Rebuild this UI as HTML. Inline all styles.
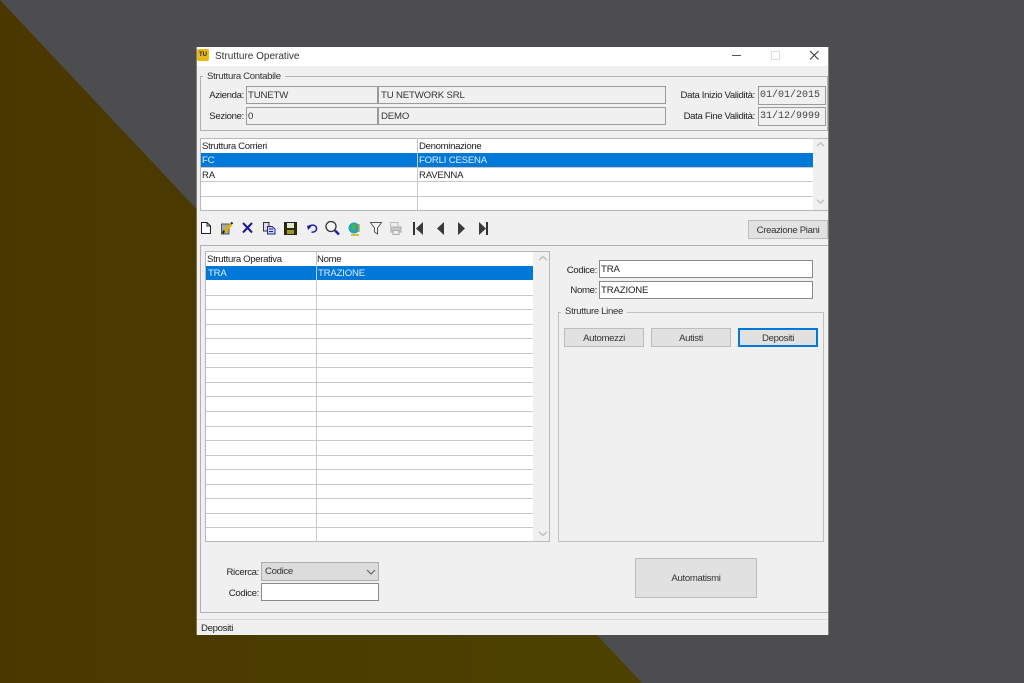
<!DOCTYPE html>
<html><head><meta charset="utf-8"><title>Strutture Operative</title>
<style>
html,body{margin:0;padding:0;width:1024px;height:683px;overflow:hidden;background:#4d4d4f}
body{font-family:"Liberation Sans",sans-serif;font-size:9.6px;letter-spacing:-.33px;color:#222;position:relative}
.all{position:absolute;left:0;top:0;width:1024px;height:683px;filter:blur(.3px)}
.a{position:absolute;box-sizing:border-box;white-space:nowrap}
.t{position:absolute;white-space:nowrap;line-height:12px;height:12px;margin-top:1px}
.r{text-align:right}
.u{letter-spacing:-.2px}
.f{position:absolute;box-sizing:border-box;border:1px solid #9a9a9a;background:#f0f0f0;line-height:18px;padding-left:1px;white-space:nowrap;color:#333;letter-spacing:-.15px}
.w{background:#fff;color:#222;border-color:#8a8a8a}
.m{font-family:"Liberation Mono",monospace;font-size:10px;color:#444;letter-spacing:0;line-height:17px}
.g{position:absolute;box-sizing:border-box;border:1px solid #b4b4b4}
.lg{position:absolute;background:#f0f0f0;padding:0 4px;line-height:12px;white-space:nowrap;color:#333;margin-top:1px}
.b{position:absolute;box-sizing:border-box;background:#e1e1e1;border:1px solid #bdbdbd;text-align:center;white-space:nowrap;color:#333;padding-top:1px}
.s{color:#dfeeff;letter-spacing:-.2px}
</style></head>
<body>
<div class="all">
<svg class="a" style="left:0;top:0" width="1024" height="683">
<defs><linearGradient id="bg" x1="0" x2="1" y1="0" y2="0"><stop offset="0" stop-color="#4a3700"/><stop offset="1" stop-color="#4c4200"/></linearGradient></defs>
<polygon points="0,0 642,683 0,683" fill="url(#bg)"/></svg>

<div class="a" style="left:196px;top:47px;width:1px;height:588px;background:rgba(255,255,255,.3)"></div>
<div class="a" style="left:828px;top:47px;width:1px;height:588px;background:rgba(255,255,255,.3)"></div>
<div class="a" style="left:197px;top:47px;width:631px;height:588px;background:#f0f0f0"></div>
<div class="a" style="left:197px;top:47px;width:631px;height:19px;background:#fff"></div>
<div class="a" style="left:197px;top:49px;width:12px;height:12px;background:#e8b818;border-radius:2px;font:bold 6px 'Liberation Sans',sans-serif;letter-spacing:0;color:#222;text-align:center;line-height:12px">TU</div>
<div class="t" style="left:215px;top:50px;color:#333;font-size:10px;letter-spacing:0">Strutture Operative</div>
<svg class="a" style="left:728px;top:48px" width="96" height="16" fill="none">
<path d="M4 7.500H13" stroke="#555" stroke-width="1"/>
<rect x="43.500" y="3.500" width="8" height="8" stroke="#ddd"/>
<path d="M82 3L90.500 11.500M90.500 3L82 11.500" stroke="#333" stroke-width="1"/></svg>

<!-- Struttura Contabile -->
<div class="g" style="left:200px;top:76px;width:628px;height:55px;border-color:#b0b0b0"></div>
<div class="lg" style="left:203px;top:70px">Struttura Contabile</div>
<div class="t r" style="left:200px;width:44px;top:89px">Azienda:</div>
<div class="t r" style="left:200px;width:44px;top:110px">Sezione:</div>
<div class="f" style="left:246px;top:86px;width:132px;height:18px">TUNETW</div>
<div class="f" style="left:378px;top:86px;width:288px;height:18px;padding-left:2px">TU NETWORK SRL</div>
<div class="f" style="left:246px;top:107px;width:132px;height:18px">0</div>
<div class="f" style="left:378px;top:107px;width:288px;height:18px;padding-left:2px">DEMO</div>
<div class="t r" style="left:650px;width:105px;top:89px">Data Inizio Validità:</div>
<div class="t r" style="left:650px;width:105px;top:110px">Data Fine Validità:</div>
<div class="f m" style="left:758px;top:86px;width:68px;height:19px">01/01/2015</div>
<div class="f m" style="left:758px;top:107px;width:68px;height:19px">31/12/9999</div>

<!-- Grid 1 -->
<div class="a" style="left:200px;top:138px;width:613px;height:73px;background:#fff"></div>
<div class="a" style="left:813px;top:138px;width:15px;height:73px;background:#f0f0f0"></div>
<div class="a" style="left:200px;top:153px;width:613px;height:15px;background:#0078d7"></div>
<svg class="a" style="left:200px;top:138px" width="628" height="75" fill="none" stroke="#c8c8c8">
<path d="M0 29.500H613M0 43.500H613M0 58.500H613M217.500 0V73"/>
<path d="M0 .5H628M.5 0V73M0 72.500H628" stroke="#b8b8b8"/>
<path d="M617 8L620.500 5L624 8" stroke="#c4c4c4" stroke-width="1.500"/>
<path d="M617 62L620.500 65L624 62" stroke="#c4c4c4" stroke-width="1.500"/></svg>
<div class="t" style="left:202px;top:140px">Struttura Corrieri</div>
<div class="t" style="left:419px;top:140px">Denominazione</div>
<div class="t s" style="left:202px;top:154px">FC</div>
<div class="t s" style="left:419px;top:154px">FORLI CESENA</div>
<div class="t u" style="left:202px;top:169px">RA</div>
<div class="t u" style="left:419px;top:169px">RAVENNA</div>

<!-- Toolbar -->
<svg class="a" style="left:196px;top:218px" width="300" height="20" fill="none">
<path d="M5.500 4.500H11L14.500 8V15.500H5.500Z" fill="#fff" stroke="#222"/><path d="M11 4.500V8H14.500" stroke="#222"/>
<path d="M25.500 6H33V16H25.500Z" stroke="#555" fill="#aaa"/>
<path d="M28 14L35 6.500" stroke="#e0b000" stroke-width="3"/><path d="M27 15.500L28 12.500" stroke="#222" stroke-width="2"/><path d="M35 6L36.500 4.500" stroke="#222" stroke-width="2"/>
<path d="M47 5L56 14.500M56 5L47 14.500" stroke="#1a1a90" stroke-width="2"/>
<path d="M67.500 4.500H73V13H67.500Z" fill="#ddd" stroke="#333"/><path d="M71.500 8.500H76L79 11V16H71.500Z" fill="#cfd6f4" stroke="#20209a"/><path d="M73 11H77M73 13.500H77" stroke="#20209a"/>
<path d="M88.500 4.500H100.500V16.500H88.500Z" fill="#2c2c00" stroke="#222"/><rect x="91" y="5" width="7" height="5" fill="#e8e8d8"/><rect x="91" y="12" width="7" height="4" fill="#9a9a30"/>
<path d="M112 12L111 7.500L115.500 8.500Z" fill="#1c1ca0"/><path d="M112.500 8.500C116 6 120 7 120.500 10C121 13 118 14.500 115.500 14" stroke="#1c1ca0" stroke-width="1.500"/>
<circle cx="135" cy="8.500" r="5" fill="#f4f4f4" stroke="#333" stroke-width="1.300"/><path d="M139 12.500L143 16.500" stroke="#2020a8" stroke-width="2.500"/>
<path d="M155 17H163" stroke="#d4c040" stroke-width="2"/><circle cx="158" cy="10" r="5.500" fill="#28a0b8"/><path d="M155 7L159 6L160 10L157 13Z" fill="#48b848"/><path d="M163 6V14" stroke="#c0a830" stroke-width="1.500"/>
<path d="M174.500 4.500H185.500L181.500 10V16L178.500 14V10Z" fill="#f4f4f4" stroke="#555"/>
<path d="M194.500 8.500V4.500H202V8.500" fill="#eee" stroke="#bbb"/><path d="M195 9H205V14H195Z" fill="#c8c8c8" stroke="#aaa"/><path d="M197 12.500H203V16.500H197Z" fill="#eee" stroke="#aaa"/>
<path d="M218 4V17" stroke="#333" stroke-width="2"/><path d="M227 4V17L220 10.500Z" fill="#3a3a3a"/>
<path d="M248 4V17L241 10.500Z" fill="#3a3a3a"/>
<path d="M262 4V17L269 10.500Z" fill="#3a3a3a"/>
<path d="M283 4V17L290 10.500Z" fill="#3a3a3a"/><path d="M291 4V17" stroke="#333" stroke-width="2"/>
</svg>
<div class="b" style="left:748px;top:220px;width:80px;height:19px;line-height:17px">Creazione Piani</div>

<!-- Outer panel -->
<div class="g" style="left:200px;top:245px;width:628px;height:368px;border-right:0;border-color:#b0b0b0"></div>

<!-- Grid 2 -->
<div class="a" style="left:205px;top:251px;width:328px;height:291px;background:#fff"></div>
<div class="a" style="left:206px;top:266px;width:327px;height:14px;background:#0078d7"></div>
<svg class="a" style="left:205px;top:251px" width="346" height="292" fill="none" stroke="#c9c9c9">
<path d="M0 44.500H328M0 58.500H328M0 73.500H328M0 87.500H328M0 102.500H328M0 116.500H328M0 131.500H328M0 145.500H328M0 160.500H328M0 175.500H328M0 189.500H328M0 204.500H328M0 218.500H328M0 233.500H328M0 247.500H328M0 262.500H328M0 276.500H328M111.500 0V291"/>
<path d="M.5 0V291M0 290.500H345M344.500 0V291M0 .5H345" stroke="#b8b8b8"/>
<path d="M334 9L338 5.500L342 9" stroke="#c4c4c4" stroke-width="1.500"/>
<path d="M334 281L338 284.500L342 281" stroke="#c4c4c4" stroke-width="1.500"/></svg>
<div class="t" style="left:207px;top:253px">Struttura Operativa</div>
<div class="t" style="left:317px;top:253px">Nome</div>
<div class="t s" style="left:208px;top:267px">TRA</div>
<div class="t s" style="left:318px;top:267px">TRAZIONE</div>

<!-- Right fields -->
<div class="t r" style="left:550px;width:47px;top:264px">Codice:</div>
<div class="t r" style="left:550px;width:47px;top:284px">Nome:</div>
<div class="f w" style="left:599px;top:260px;width:214px;height:18px">TRA</div>
<div class="f w" style="left:599px;top:281px;width:214px;height:18px">TRAZIONE</div>

<div class="g" style="left:558px;top:312px;width:266px;height:230px;border-color:#c0c0c0"></div>
<div class="lg" style="left:561px;top:305px">Strutture Linee</div>
<div class="b" style="left:564px;top:328px;width:80px;height:19px;line-height:17px">Automezzi</div>
<div class="b" style="left:651px;top:328px;width:80px;height:19px;line-height:17px">Autisti</div>
<div class="b" style="left:738px;top:328px;width:80px;height:19px;line-height:15px;border:2px solid #0078d7">Depositi</div>

<!-- Search -->
<div class="t r" style="left:210px;width:49px;top:566px">Ricerca:</div>
<div class="t r" style="left:210px;width:49px;top:587px">Codice:</div>
<div class="f" style="left:261px;top:562px;width:118px;height:19px;background:#dcdcdc;border-color:#adadad;padding-left:3px;line-height:18px;letter-spacing:-.33px">Codice</div>
<svg class="a" style="left:365px;top:567px" width="12" height="10" fill="none"><path d="M2 3L6 7L10 3" stroke="#666" stroke-width="1.200"/></svg>
<div class="f w" style="left:261px;top:583px;width:118px;height:18px"></div>
<div class="b" style="left:635px;top:558px;width:122px;height:40px;line-height:38px">Automatismi</div>

<!-- Status -->
<div class="a" style="left:197px;top:619px;width:631px;height:1px;background:#dadada"></div>
<div class="t" style="left:201px;top:622px">Depositi</div>
</div>
</body></html>
